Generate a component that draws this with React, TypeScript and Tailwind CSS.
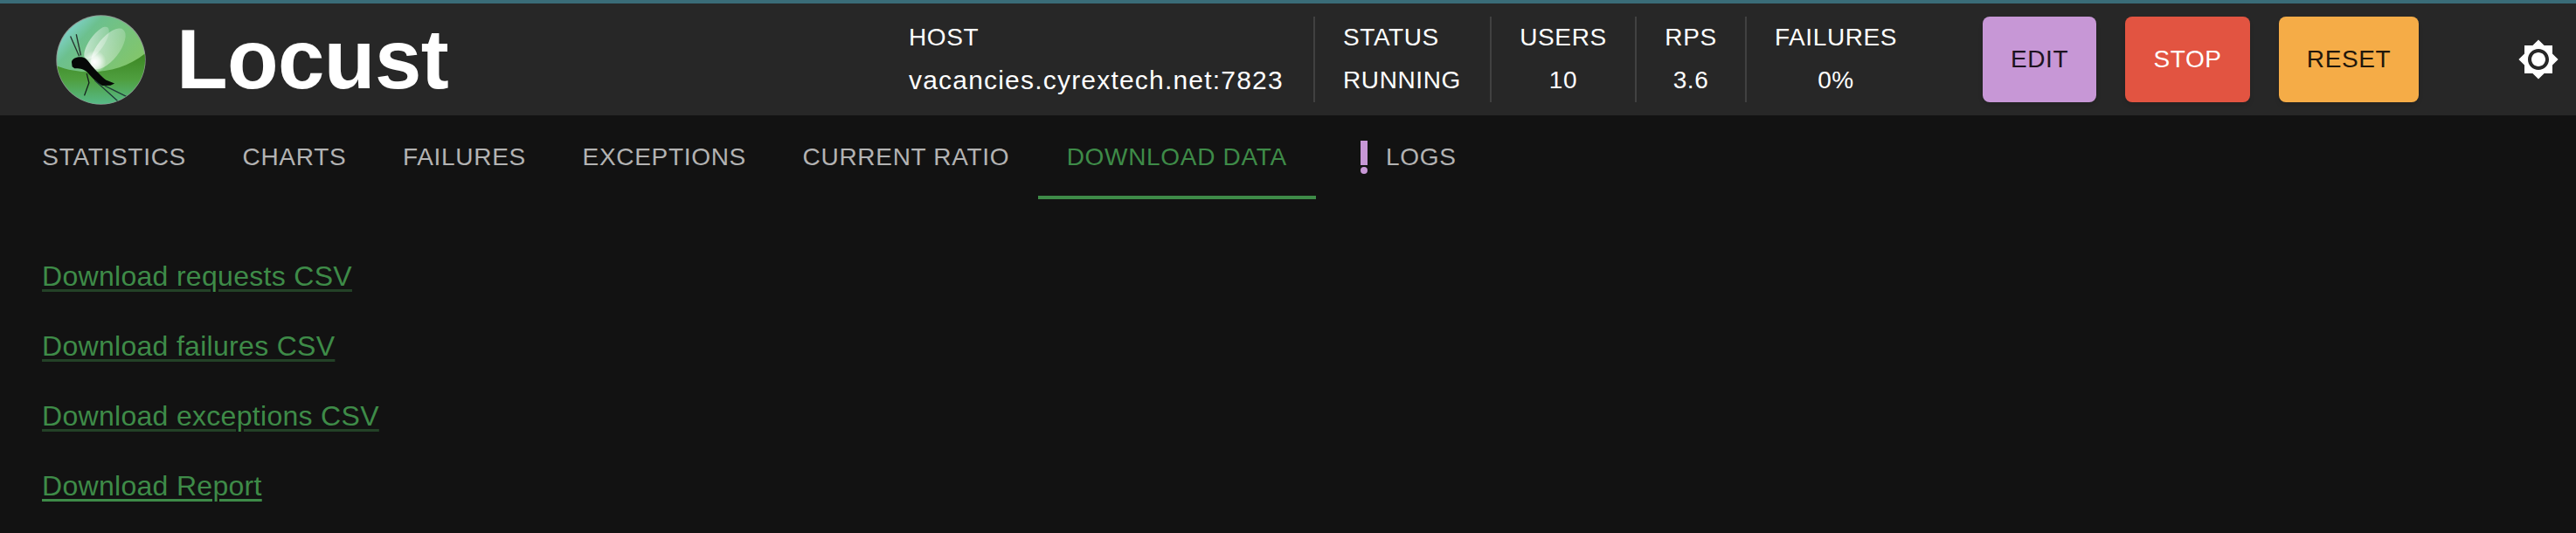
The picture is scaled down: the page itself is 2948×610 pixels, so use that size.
import React from "react";

const Logo = () => (
  <svg viewBox="72 48 310 310" className="w-[103px] h-[103px] shrink-0">
    <defs>
      <linearGradient id="top" x1="0.12" y1="0.05" x2="0.8" y2="0.7">
        <stop offset="0" stopColor="#84d6da" />
        <stop offset="0.28" stopColor="#6cc08e" />
        <stop offset="1" stopColor="#84c668" />
      </linearGradient>
      <linearGradient id="low" x1="0.5" y1="0" x2="0.5" y2="1">
        <stop offset="0" stopColor="#3a8420" />
        <stop offset="0.5" stopColor="#4f9f3f" />
        <stop offset="1" stopColor="#58bd90" />
      </linearGradient>
      <radialGradient id="glow" cx="0.5" cy="0.5" r="0.5">
        <stop offset="0" stopColor="#ffffff" />
        <stop offset="0.45" stopColor="#ffffff" stopOpacity="0.7" />
        <stop offset="1" stopColor="#ffffff" stopOpacity="0" />
      </radialGradient>
      <linearGradient id="wing" x1="0.2" y1="1" x2="0.8" y2="0">
        <stop offset="0" stopColor="#ffffff" stopOpacity="0.6" />
        <stop offset="1" stopColor="#ffffff" stopOpacity="0.18" />
      </linearGradient>
      <clipPath id="ball">
        <circle cx="227" cy="203" r="152" />
      </clipPath>
    </defs>
    <circle cx="227" cy="203" r="154" fill="#8f9a94" />
    <circle cx="227" cy="203" r="151" fill="url(#top)" />
    <g clipPath="url(#ball)">
      <path d="M70 222 C170 262 300 250 385 176 L385 365 L70 365 Z" fill="url(#low)" />
      <ellipse cx="212" cy="145" rx="25" ry="66" transform="rotate(35 212 145)" fill="url(#wing)" />
      <ellipse cx="252" cy="165" rx="38" ry="84" transform="rotate(38 252 165)" fill="url(#wing)" />
      <circle cx="205" cy="210" r="40" fill="url(#glow)" />
      <path d="M122 122 L152 190 M142 115 L158 188" stroke="#26332f" strokeWidth="4" fill="none" />
      <path
        d="M126 210 C130 196 148 192 164 194 C176 196 184 208 194 222 C210 240 230 262 244 272 L274 284 L260 291 L232 292 C212 282 194 262 178 244 C166 232 150 232 136 232 L128 226 Z"
        fill="#060807"
      />
      <path d="M178 250 L186 282 L170 326" stroke="#14201b" strokeWidth="4" fill="none" />
      <path d="M206 274 L286 346 M240 292 L316 330" stroke="#1f3b38" strokeWidth="4" fill="none" />
    </g>
  </svg>
);

const Stat = ({
  label,
  value,
  className,
  valueClass,
}: {
  label: string;
  value: string;
  className: string;
  valueClass?: string;
}) => (
  <div className={`flex flex-col h-[98px] gap-[1px] ${className}`}>
    <span className="leading-[48px] h-[48px] tracking-[0.6px]">{label}</span>
    <span className={`leading-[48px] h-[48px] tracking-[0.6px] ${valueClass ?? ""}`}>{value}</span>
  </div>
);

const tabs = ["STATISTICS", "CHARTS", "FAILURES", "EXCEPTIONS", "CURRENT RATIO"];
const links = ["Download requests CSV", "Download failures CSV", "Download exceptions CSV"];

export default function App() {
  return (
    <div className="min-h-screen bg-[#121212] font-['Liberation_Sans',Arial,sans-serif] overflow-hidden">
      <header className="h-[132px] bg-[#272727] border-t-4 border-[#3a6c78] flex items-center text-white text-[28px]">
        <div className="flex items-center pl-[64px] w-[1007px] shrink-0">
          <Logo />
          <span className="ml-[35px] text-[96px] leading-none font-bold text-white tracking-[-0.6px]">Locust</span>
        </div>
        <Stat
          label="HOST"
          value="vacancies.cyrextech.net:7823"
          valueClass="text-[30px] !tracking-[1.2px]"
          className="w-[498px] pl-[33px] border-r-2 border-[#414141] items-start"
        />
        <Stat label="STATUS" value="RUNNING" className="w-[202px] pl-[32px] border-r-2 border-[#414141] items-start" />
        <Stat label="USERS" value="10" className="w-[166px] border-r-2 border-[#414141] items-center" />
        <Stat label="RPS" value="3.6" className="w-[126px] border-r-2 border-[#414141] items-center" />
        <Stat label="FAILURES" value="0%" className="w-[204px] items-center" />
        <div className="flex items-center gap-[33px] ml-[66px] tracking-[0.6px]">
          <button className="w-[130px] h-[98px] rounded-[8px] bg-[#c797d6] text-[#1d1320] shadow-md">EDIT</button>
          <button className="w-[143px] h-[98px] rounded-[8px] bg-[#e25441] text-white shadow-md">STOP</button>
          <button className="w-[160px] h-[98px] rounded-[8px] bg-[#f5ac47] text-[#21170b] shadow-md">RESET</button>
        </div>
        <svg viewBox="0 0 24 24" className="w-[48px] h-[48px] ml-[113px] fill-white">
          <path d="M20 8.69V4h-4.69L12 .69 8.69 4H4v4.69L.69 12 4 15.31V20h4.69L12 23.31 15.31 20H20v-4.69L23.31 12 20 8.69zM12 18c-3.31 0-6-2.69-6-6s2.69-6 6-6 6 2.69 6 6-2.69 6-6 6zm0-10c-2.21 0-4 1.79-4 4s1.79 4 4 4 4-1.79 4-4-1.79-4-4-4z" />
        </svg>
      </header>
      <nav className="flex h-[96px] pl-[16px] text-[28px] tracking-[0.7px] text-[#b3b3b3]">
        {tabs.map((t) => (
          <div key={t} className="h-full px-[32.3px] flex items-center">{t}</div>
        ))}
        <div className="h-full px-[33px] flex items-center text-[#3e8b48] border-b-4 border-[#3e8b48] pt-[4px]">DOWNLOAD DATA</div>
        <div className="h-full pl-[51px] flex items-center">
          <span className="flex flex-col items-center gap-[2px] w-[8px] mr-[21px]">
            <span className="block w-[8px] h-[28px] bg-[#c797d6]" />
            <span className="block w-[8px] h-[8px] rounded-full bg-[#c797d6]" />
          </span>
          LOGS
        </div>
      </nav>
      <div className="pl-[48px] pt-[64px] flex flex-col gap-[32px] text-[32px] leading-[48px] tracking-[0.3px] text-[#3e8b48]">
        {links.map((l) => (
          <a key={l} href="#" className="underline decoration-[#3e8b48]/40 decoration-[3px] underline-offset-[4px] w-fit">{l}</a>
        ))}
        <a href="#" className="underline decoration-[#3e8b48] decoration-[3px] underline-offset-[4px] w-fit">Download Report</a>
      </div>
    </div>
  );
}
